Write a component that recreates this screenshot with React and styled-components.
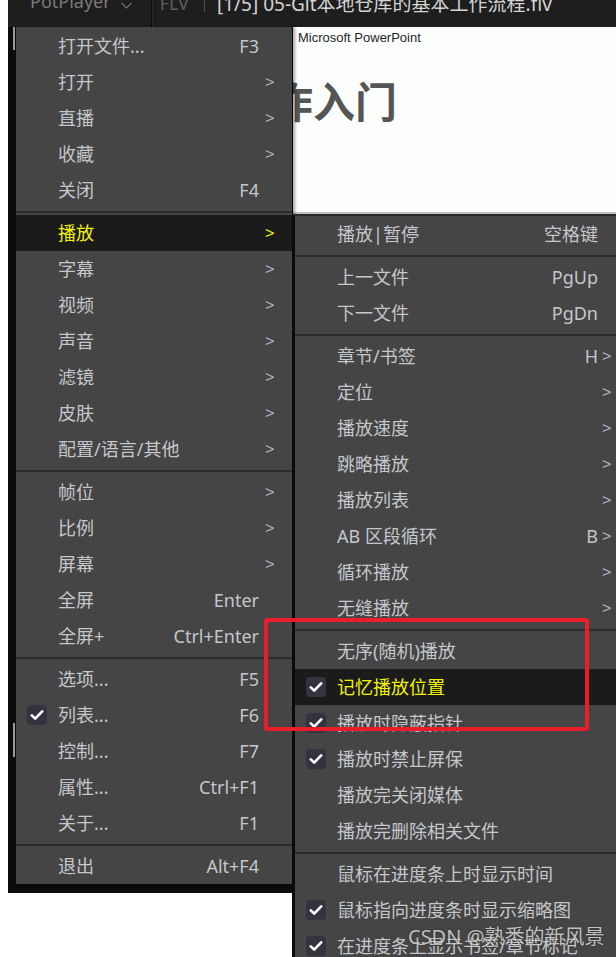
import styled, { createGlobalStyle } from "styled-components";

const menuFont = `"Noto Sans", "Noto Sans CJK SC", sans-serif`;

const GlobalStyle = createGlobalStyle`
  html, body {
    margin: 0;
    padding: 0;
    background: #ffffff;
  }
  * {
    box-sizing: border-box;
  }
`;

const Page = styled.div`
  position: relative;
  width: 616px;
  height: 957px;
  overflow: hidden;
  background: #ffffff;
  font-family: ${menuFont};
`;

const PlayerWindow = styled.div`
  margin-left: 8px;
  width: 608px;
  height: 893px;
  background: #0b0b0b;
  display: flex;
  flex-direction: column;
`;

const TitleBar = styled.div`
  height: 27px;
  flex-shrink: 0;
  background: #1e1e1e;
  display: flex;
  align-items: flex-start;
  padding-left: 22px;
  overflow: hidden;
`;

const AppName = styled.span`
  font-size: 18px;
  line-height: 20px;
  margin-top: -9px;
  color: #7a7a7a;
  white-space: nowrap;
`;

const Chevron = styled.svg`
  margin: 2px 0 0 10px;
  flex-shrink: 0;
`;

const BarDivider = styled.div`
  width: 1px;
  height: 27px;
  margin-left: 19px;
  background: #0c0c0c;
  box-shadow: 1px 0 0 #2a2a2a;
`;

const Format = styled.span`
  font-size: 18px;
  line-height: 20px;
  margin: -7px 0 0 8px;
  color: #5e5e5e;
  white-space: nowrap;
`;

const Pipe = styled.div`
  width: 1px;
  height: 12px;
  margin-left: 15px;
  background: #505050;
`;

const FileTitle = styled.span`
  font-size: 19px;
  line-height: 20px;
  margin: -6px 0 0 12px;
  color: #d4d4d4;
  white-space: nowrap;
`;

const VideoArea = styled.div`
  margin-left: 8px;
  height: 187px;
  flex-shrink: 0;
  background: #fcfefc;
  border-bottom: 2px solid #c2c2c2;
  display: flex;
  flex-direction: column;
`;

const SlideCaption = styled.div`
  margin: 3px 0 0 282px;
  font-family: "Liberation Sans", Arial, sans-serif;
  font-size: 13px;
  line-height: 16px;
  color: #262626;
`;

const SlideHeading = styled.div`
  margin: 29px 0 0 213px;
  font-family: "Noto Sans CJK SC", sans-serif;
  font-size: 42px;
  font-weight: 700;
  line-height: 50px;
  color: #555555;
  white-space: nowrap;
`;

const FrameMark = styled.span`
  position: absolute;
  left: 13px;
  top: ${(p) => p.$top}px;
  width: 2px;
  height: ${(p) => p.$h}px;
  background: #9a9a9a;
`;

const MainMenu = styled.div`
  position: absolute;
  left: 16px;
  top: 27px;
  width: 277px;
  padding-top: 1px;
  background: #454545;
  border-right: 1px solid #000;
  box-shadow: 2px 0 3px rgba(0, 0, 0, 0.35);
`;

const SubMenu = styled.div`
  position: absolute;
  left: 292px;
  top: 214px;
  width: 334px;
  height: 760px;
  background: #454545;
  border-left: 3px solid #0a0a0a;
  border-top: 2px solid #2a2a2a;
`;

const Row = styled.div`
  display: grid;
  grid-template-columns: 42px 1fr auto ${(p) => p.$arrowCol}px;
  align-items: center;
  height: 36px;
  font-size: 18px;
  line-height: 36px;
  white-space: nowrap;
  color: ${(p) => (p.$active ? "#f4f400" : "#c4c7cb")};
  background: ${(p) => (p.$active ? "#1b1b1b" : "transparent")};
`;

const CheckCell = styled.div`
  display: flex;
  align-items: center;
  padding-left: 11px;
`;

const CheckBox = styled.div`
  width: 20px;
  height: 20px;
  border-radius: 4px;
  background: #34343f;
  display: flex;
  align-items: center;
  justify-content: center;
`;

const Label = styled.span``;

const Shortcut = styled.span`
  text-align: right;
`;

const Arrow = styled.span`
  padding-left: ${(p) => p.$pad}px;
  font-size: 17px;
  color: ${(p) => (p.$active ? "#f4f400" : "#aab3bf")};
`;

const Separator = styled.div`
  height: 7px;
  display: flex;
  align-items: center;
  &::after {
    content: "";
    flex: 1;
    height: 2px;
    background: #2c2c2e;
  }
`;

const Highlight = styled.div`
  position: absolute;
  left: 264px;
  top: 618px;
  width: 325px;
  height: 113px;
  border: 4px solid #e91d2b;
  border-radius: 3px;
`;

const Watermark = styled.div`
  position: absolute;
  left: 408px;
  top: 923px;
  font-family: ${menuFont};
  font-size: 20px;
  line-height: 28px;
  color: rgba(232, 232, 232, 0.78);
  text-shadow: 0 0 2px rgba(0, 0, 0, 0.4);
  white-space: nowrap;
`;

const mainItems = [
  { label: "打开文件...", key: "F3" },
  { label: "打开", arrow: true },
  { label: "直播", arrow: true },
  { label: "收藏", arrow: true },
  { label: "关闭", key: "F4" },
  "sep",
  { label: "播放", arrow: true, active: true },
  { label: "字幕", arrow: true },
  { label: "视频", arrow: true },
  { label: "声音", arrow: true },
  { label: "滤镜", arrow: true },
  { label: "皮肤", arrow: true },
  { label: "配置/语言/其他", arrow: true },
  "sep",
  { label: "帧位", arrow: true },
  { label: "比例", arrow: true },
  { label: "屏幕", arrow: true },
  { label: "全屏", key: "Enter" },
  { label: "全屏+", key: "Ctrl+Enter" },
  "sep",
  { label: "选项...", key: "F5" },
  { label: "列表...", key: "F6", checked: true },
  { label: "控制...", key: "F7" },
  { label: "属性...", key: "Ctrl+F1" },
  { label: "关于...", key: "F1" },
  "sep",
  { label: "退出", key: "Alt+F4" },
];

const playItems = [
  { label: "播放|暂停", key: "空格键" },
  "sep",
  { label: "上一文件", key: "PgUp" },
  { label: "下一文件", key: "PgDn" },
  "sep",
  { label: "章节/书签", key: "H", arrow: true },
  { label: "定位", arrow: true },
  { label: "播放速度", arrow: true },
  { label: "跳略播放", arrow: true },
  { label: "播放列表", arrow: true },
  { label: "AB 区段循环", key: "B", arrow: true },
  { label: "循环播放", arrow: true },
  { label: "无缝播放", arrow: true },
  "sep",
  { label: "无序(随机)播放" },
  { label: "记忆播放位置", checked: true, active: true },
  { label: "播放时隐蔽指针", checked: true },
  { label: "播放时禁止屏保", checked: true },
  { label: "播放完关闭媒体" },
  { label: "播放完删除相关文件" },
  "sep",
  { label: "鼠标在进度条上时显示时间" },
  { label: "鼠标指向进度条时显示缩略图", checked: true },
  { label: "在进度条上显示书签/章节标记", checked: true },
];

const CheckMark = () => (
  <svg width="14" height="12" viewBox="0 0 14 12">
    <polyline
      points="1.8,6.4 5.2,9.6 12.2,2.4"
      fill="none"
      stroke="#ffffff"
      strokeWidth="2.6"
      strokeLinecap="round"
      strokeLinejoin="round"
    />
  </svg>
);

const MenuRows = ({ items, arrowCol, arrowPad }) =>
  items.map((item, i) =>
    item === "sep" ? (
      <Separator key={i} />
    ) : (
      <Row key={i} $active={item.active} $arrowCol={arrowCol}>
        <CheckCell>
          {item.checked && (
            <CheckBox>
              <CheckMark />
            </CheckBox>
          )}
        </CheckCell>
        <Label>{item.label}</Label>
        <Shortcut>{item.key}</Shortcut>
        <Arrow $pad={arrowPad} $active={item.active}>
          {item.arrow ? ">" : ""}
        </Arrow>
      </Row>
    )
  );

const App = () => {
  return (
    <Page>
      <GlobalStyle />
      <PlayerWindow>
        <TitleBar>
          <AppName>PotPlayer</AppName>
          <Chevron width="11" height="7" viewBox="0 0 11 7">
            <polyline
              points="0.5,0.8 5.5,6 10.5,0.8"
              fill="none"
              stroke="#777"
              strokeWidth="1.1"
            />
          </Chevron>
          <BarDivider />
          <Format>FLV</Format>
          <Pipe />
          <FileTitle>[1/5] 05-Git本地仓库的基本工作流程.flv</FileTitle>
        </TitleBar>
        <VideoArea>
          <SlideCaption>Microsoft PowerPoint</SlideCaption>
          <SlideHeading>操作入门</SlideHeading>
        </VideoArea>
      </PlayerWindow>

      <FrameMark $top={27} $h={23} />
      <FrameMark $top={723} $h={34} />

      <MainMenu>
        <MenuRows items={mainItems} arrowCol={33} arrowPad={6} />
      </MainMenu>

      <SubMenu>
        <MenuRows items={playItems} arrowCol={28} arrowPad={4} />
      </SubMenu>

      <Highlight />
      <Watermark>CSDN @熟悉的新风景</Watermark>
    </Page>
  );
};

export default App;
